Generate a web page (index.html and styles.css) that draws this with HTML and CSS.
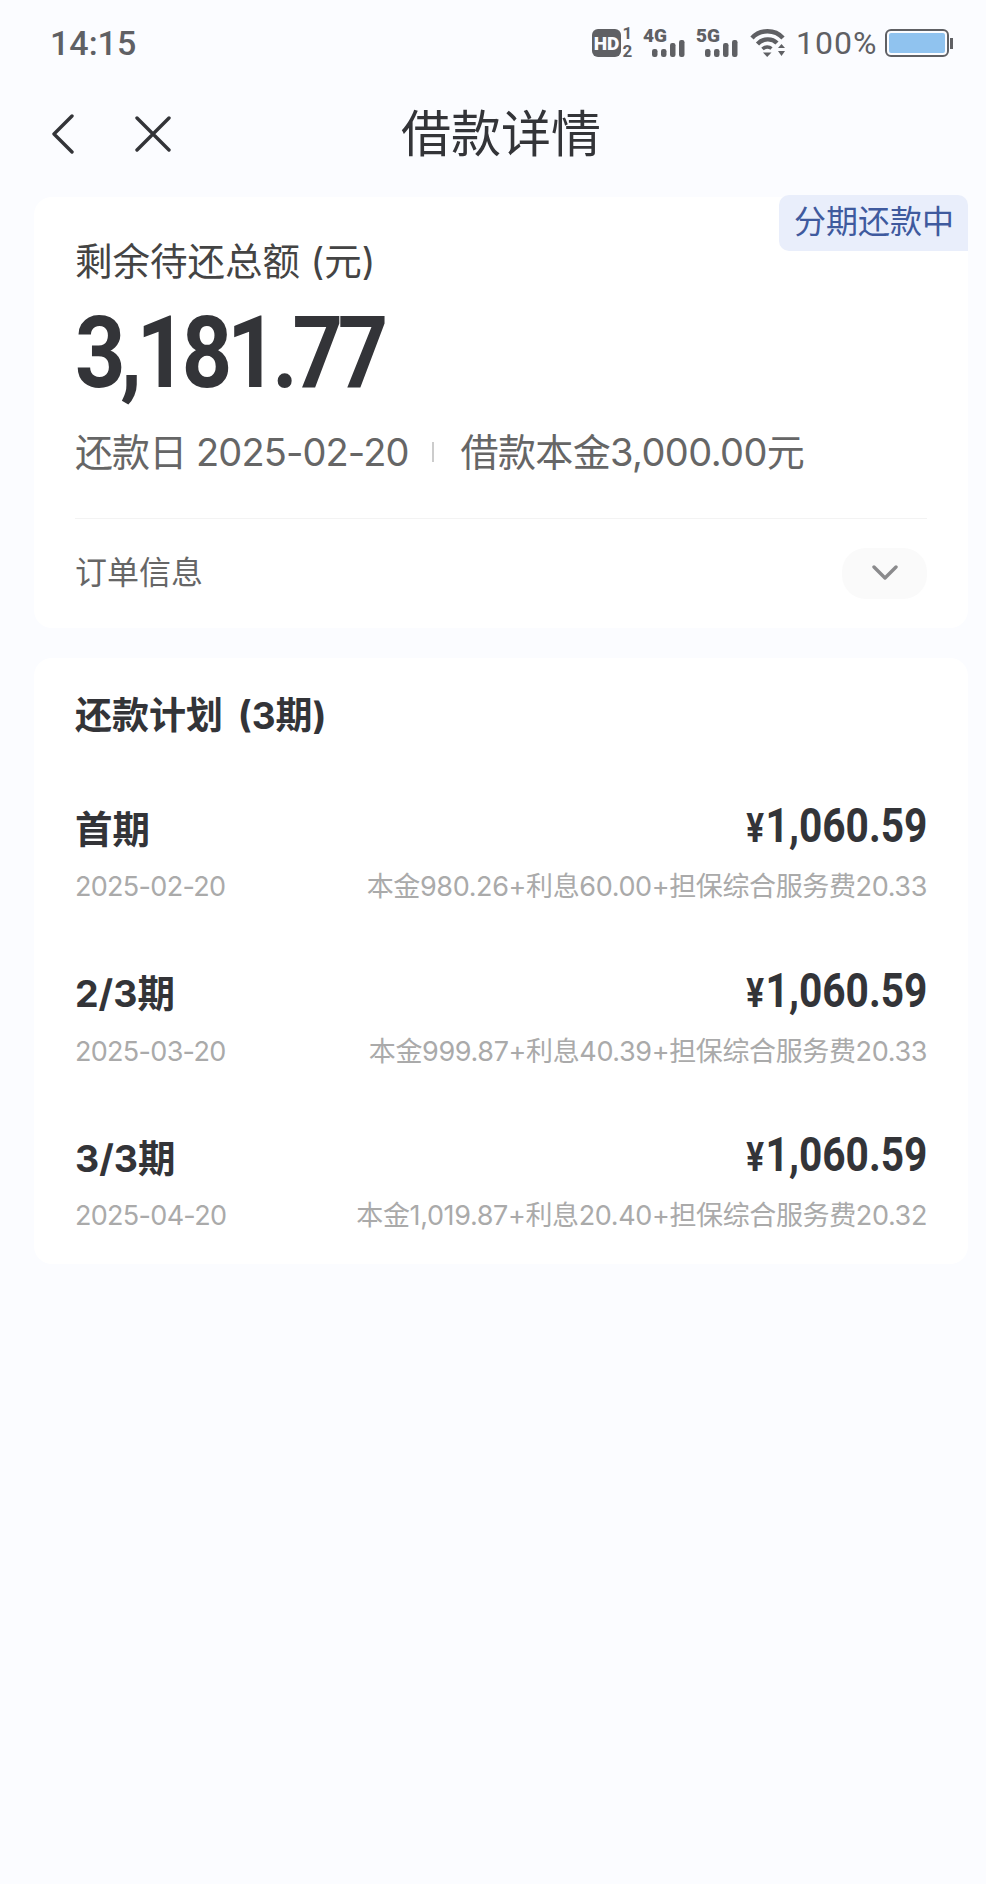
FILE: index.html
```html
<!DOCTYPE html>
<html lang="zh-CN">
<head>
    <meta charset="UTF-8">
    <meta name="viewport" content="width=device-width, initial-scale=1.0">
    <title>借款详情</title>
    <link rel="stylesheet" href="styles.css">
</head>
<body>
    <div class="status-bar">
        <span class="time">14:15</span>
        <div class="status-icons">
            <svg class="ic-hd" width="41" height="42" viewBox="0 -6 41 42">
                <rect x="0" y="1" width="29" height="28" rx="6" fill="#5f6064"/>
                <text x="14.5" y="21.5" class="ic-hd-text">HD</text>
                <text x="35.5" y="11" class="ic-small">1</text>
                <text x="35.5" y="28.5" class="ic-small">2</text>
            </svg>
            <svg class="ic-net" width="43" height="42" viewBox="0 -6 43 42">
                <text x="0" y="14" class="ic-gen">4G</text>
                <rect x="9" y="21" width="5.5" height="8" rx="2.2" fill="#5f6064"/>
                <rect x="18" y="21" width="5.5" height="8" rx="2.2" fill="#5f6064"/>
                <rect x="27" y="15" width="5.5" height="14" rx="2.2" fill="#5f6064"/>
                <rect x="36" y="12" width="5.5" height="17" rx="2.2" fill="#5f6064"/>
            </svg>
            <svg class="ic-net" width="43" height="42" viewBox="0 -6 43 42">
                <text x="0" y="14" class="ic-gen">5G</text>
                <rect x="9" y="21" width="5.5" height="8" rx="2.2" fill="#5f6064"/>
                <rect x="18" y="21" width="5.5" height="8" rx="2.2" fill="#5f6064"/>
                <rect x="27" y="15" width="5.5" height="14" rx="2.2" fill="#5f6064"/>
                <rect x="36" y="12" width="5.5" height="17" rx="2.2" fill="#5f6064"/>
            </svg>
            <svg class="ic-wifi" width="36" height="30" viewBox="0 0 36 30">
                <path d="M2 10 C10 1 25 1 33 10" fill="none" stroke="#5f6064" stroke-width="4.4"/>
                <path d="M7.5 16 C13 10 22 10 27 15" fill="none" stroke="#5f6064" stroke-width="4.4"/>
                <path d="M12.5 21 C15 18.5 19 18.5 21.5 20.5" fill="none" stroke="#5f6064" stroke-width="3.5"/>
                <path d="M13 24.5 L21.5 24.5 L17.2 29 Z" fill="#5f6064"/>
                <path d="M28 20 L35 20 L31.5 16 Z" fill="#5f6064"/>
                <path d="M28 23 L35 23 L31.5 28 Z" fill="#5f6064"/>
            </svg>
            <span class="battery-text">100%</span>
            <div class="battery">
                <div class="battery-body"><div class="battery-fill"></div></div>
                <div class="battery-cap"></div>
            </div>
        </div>
    </div>

    <div class="nav-bar">
        <svg class="nav-back" width="22" height="40" viewBox="0 0 22 40">
            <path d="M20 2 L2 20 L20 38" fill="none" stroke="#333438" stroke-width="3.4" stroke-linecap="round" stroke-linejoin="round"/>
        </svg>
        <svg class="nav-close" width="36" height="36" viewBox="0 0 36 36">
            <path d="M2 2 L34 34 M34 2 L2 34" fill="none" stroke="#333438" stroke-width="3.4" stroke-linecap="round"/>
        </svg>
        <h1 class="nav-title">借款详情</h1>
    </div>

    <div class="card summary">
        <div class="badge">分期还款中</div>
        <div class="summary-label">剩余待还总额 (元)</div>
        <div class="summary-amount">3,181.77</div>
        <div class="summary-meta">
            <span class="meta-date">还款日 2025-02-20</span>
            <span class="meta-sep"></span>
            <span class="meta-principal">借款本金3,000.00元</span>
        </div>
        <div class="order-row">
            <span class="order-label">订单信息</span>
            <div class="order-toggle">
                <svg width="26" height="16" viewBox="0 0 26 16">
                    <path d="M2 2 L13 13 L24 2" fill="none" stroke="#8a8a8c" stroke-width="3.4" stroke-linecap="round" stroke-linejoin="round"/>
                </svg>
            </div>
        </div>
    </div>

    <div class="card plan">
        <h2 class="plan-title">还款计划 (3期)</h2>
        <div class="plan-row">
            <div class="row-top"><span class="row-name">首期</span><span class="row-amount"><span class="row-yen">¥</span>1,060.59</span></div>
            <div class="row-sub"><span class="row-date">2025-02-20</span><span class="row-detail">本金980.26+利息60.00+担保综合服务费20.33</span></div>
        </div>
        <div class="plan-row">
            <div class="row-top"><span class="row-name">2/3期</span><span class="row-amount"><span class="row-yen">¥</span>1,060.59</span></div>
            <div class="row-sub"><span class="row-date">2025-03-20</span><span class="row-detail">本金999.87+利息40.39+担保综合服务费20.33</span></div>
        </div>
        <div class="plan-row">
            <div class="row-top"><span class="row-name">3/3期</span><span class="row-amount"><span class="row-yen">¥</span>1,060.59</span></div>
            <div class="row-sub"><span class="row-date">2025-04-20</span><span class="row-detail">本金1,019.87+利息20.40+担保综合服务费20.32</span></div>
        </div>
    </div>
</body>
</html>
```

FILE: styles.css
```css
* {
    box-sizing: border-box;
}
body {
    margin: 0;
    height: 1884px;
    background-color: #fbfcff;
    font-family: "Inter", "Noto Sans CJK SC", sans-serif;
    color: #333438;
}
.status-bar {
    height: 86px;
    padding: 28px 33px 0 50px;
    display: flex;
    justify-content: space-between;
    align-items: flex-start;
}
.time {
    font-family: "Roboto", sans-serif;
    font-size: 34px;
    font-weight: 500;
    line-height: 30px;
    color: #5f6064;
}
.status-icons {
    display: flex;
    align-items: flex-start;
}
.ic-hd-text {
    font-family: "Roboto", sans-serif;
    font-size: 19px;
    font-weight: 900;
    fill: #fbfcff;
    text-anchor: middle;
}
.ic-small {
    font-family: "Roboto", sans-serif;
    font-size: 17px;
    font-weight: 700;
    fill: #5f6064;
    text-anchor: middle;
}
.ic-gen {
    font-family: "Roboto", sans-serif;
    font-size: 19px;
    font-weight: 900;
    fill: #5f6064;
}
.ic-hd,
.ic-net {
    margin-top: -6px;
    margin-right: 10px;
}
.ic-wifi {
    margin-left: 1px;
    margin-right: 10px;
}
.battery-text {
    font-family: "Roboto", sans-serif;
    font-size: 32px;
    line-height: 30px;
    letter-spacing: 1px;
    color: #5f6064;
    width: 89px;
}
.battery {
    display: flex;
    align-items: center;
    height: 30px;
}
.battery-body {
    width: 64px;
    height: 28px;
    border: 2px solid #5f6064;
    border-radius: 6px;
    padding: 2px;
}
.battery-fill {
    height: 100%;
    background-color: #90c3ef;
    border-radius: 2px;
}
.battery-cap {
    width: 3px;
    height: 11px;
    background-color: #5f6064;
    margin-left: 1px;
}

.nav-bar {
    position: relative;
    height: 96px;
    padding-left: 52px;
    display: flex;
    align-items: center;
}
.nav-back {
    margin-right: 61px;
}
.nav-title {
    position: absolute;
    left: 16px;
    right: 0;
    margin: 0;
    text-align: center;
    font-size: 50px;
    font-weight: 400;
    line-height: 60px;
}

.card {
    position: relative;
    margin: 0 18px 0 34px;
    background-color: #fff;
    border-radius: 18px;
    padding: 0 41px;
}
.summary {
    height: 431px;
    margin-top: 15px;
}
.badge {
    position: absolute;
    top: -2px;
    right: 0;
    height: 56px;
    padding: 0 14px 0 15px;
    background-color: #e9eefb;
    border-radius: 10px 10px 0 10px;
    font-size: 32px;
    line-height: 54px;
    color: #3f5a9e;
}
.summary-label {
    padding-top: 40px;
    font-size: 37.5px;
    line-height: 50px;
    color: #444;
}
.summary-amount {
    font-family: "Roboto", sans-serif;
    font-size: 100px;
    font-weight: 700;
    line-height: 100px;
    margin-top: 16px;
    letter-spacing: -6px;
    transform: scaleX(0.88);
    transform-origin: left center;
}
.summary-meta {
    margin-top: 24px;
    display: flex;
    align-items: center;
    font-size: 38px;
    line-height: 50px;
    color: #666;
}
.meta-date {
    letter-spacing: -0.9px;
}
.meta-principal {
    letter-spacing: -0.6px;
}
.meta-sep {
    width: 2px;
    height: 20px;
    margin: 0 26px 0 24px;
    background-color: #ccc;
}
.order-row {
    margin-top: 41px;
    height: 103px;
    border-top: 1px solid #f3f3f3;
    display: flex;
    justify-content: space-between;
    align-items: center;
}
.order-label {
    font-size: 32px;
    color: #666;
}
.order-toggle {
    width: 85px;
    height: 51px;
    margin-top: 6px;
    border-radius: 24px;
    background-color: #fafafa;
    display: flex;
    align-items: center;
    justify-content: center;
}

.plan {
    margin-top: 30px;
    height: 606px;
}
.plan-title {
    margin: 0;
    padding-top: 35px;
    font-size: 37px;
    font-weight: 700;
    line-height: 46px;
    word-spacing: 6px;
}
.plan-row {
    height: 164.5px;
}
.plan-row:first-of-type {
    margin-top: 63px;
}
.row-top {
    display: flex;
    justify-content: space-between;
    align-items: center;
    height: 48px;
}
.row-name {
    font-size: 37.5px;
    font-weight: 700;
}
.row-amount {
    font-family: "Roboto", sans-serif;
    font-size: 49px;
    font-weight: 700;
    line-height: 48px;
    margin-top: -1px;
    padding-top: 4px;
    transform: scaleX(0.83);
    transform-origin: right center;
}
.row-yen {
    font-size: 40px;
    margin-right: 2px;
}
.row-sub {
    margin-top: 17px;
    display: flex;
    justify-content: space-between;
    font-size: 27px;
    line-height: 40px;
    color: #aaa;
}
.row-date {
    letter-spacing: -0.7px;
}
.row-detail {
    letter-spacing: -0.37px;
}
```
